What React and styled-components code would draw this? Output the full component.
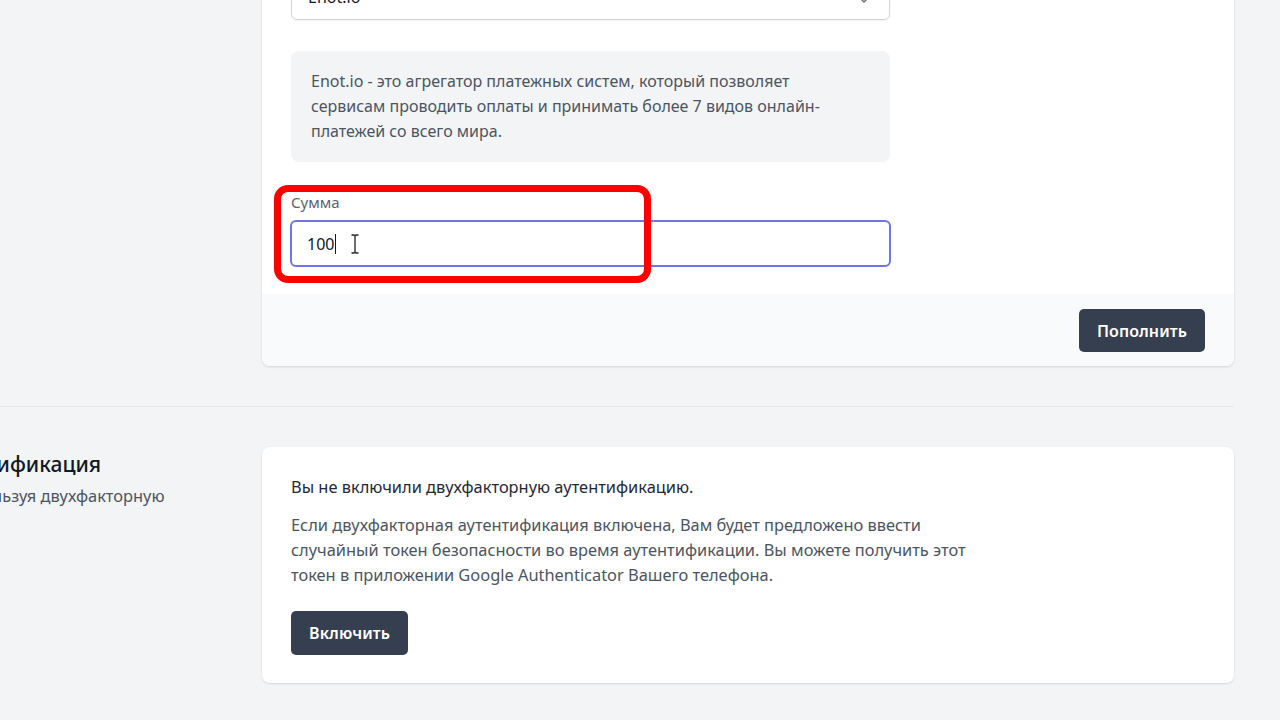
import React from 'react'
import styled, { createGlobalStyle } from 'styled-components'

const Global = createGlobalStyle`
  html, body {
    margin: 0;
    padding: 0;
    background: #f3f4f6;
    overflow: hidden;
  }
  body {
    font-family: "Noto Sans", "Open Sans", sans-serif;
    color: #111827;
  }
`

const Viewport = styled.div`
  width: 1280px;
  height: 720px;
  overflow: hidden;
`

const Page = styled.div`
  margin-top: -84px;
  margin-left: -238px;
  width: 1472px;
`

const Section = styled.div`
  display: grid;
  grid-template-columns: 471px 972px;
  column-gap: 29px;
`

const Aside = styled.div`
  display: flex;
  flex-direction: column;
`

const AsideTitle = styled.h3`
  margin: 0;
  font-size: 21px;
  line-height: 34px;
  font-weight: 500;
  color: #111827;
`

const AsideText = styled.p`
  margin: 2px 0 0;
  font-size: 16.4px;
  line-height: 25px;
  color: #4b5563;
`

const Card = styled.div`
  background: #fff;
  border-radius: 8px;
  box-shadow: 0 1px 3px rgba(0, 0, 0, 0.08), 0 1px 2px rgba(0, 0, 0, 0.05);
  overflow: hidden;
`

const CardBody = styled.div`
  position: relative;
  padding: ${p => p.$top || 29}px 29px ${p => p.$bottom || 29}px;
`

const CardFooter = styled.div`
  display: flex;
  justify-content: flex-end;
  padding: 15px 29px 14px;
  background: #f9fafb;
`

const Label = styled.label`
  display: block;
  font-size: 15px;
  line-height: 25px;
  color: #5b6472;
`

const Select = styled.div`
  box-sizing: border-box;
  margin-top: 4px;
  width: 599px;
  height: 46px;
  display: flex;
  align-items: center;
  justify-content: space-between;
  padding: 0 20px 0 16px;
  border: 1px solid #d1d5db;
  border-radius: 6px;
  box-shadow: 0 1px 2px rgba(0, 0, 0, 0.06);
  font-size: 16px;
  color: #111827;
`

const InfoBox = styled.div`
  box-sizing: border-box;
  margin-top: 31px;
  width: 599px;
  padding: 18px 50px 18px 20px;
  background: #f3f4f6;
  border-radius: 8px;
  font-size: 16px;
  line-height: 25px;
  color: #4b5563;
`

const Field = styled.div`
  margin-top: 28px;
`

const Input = styled.div`
  box-sizing: border-box;
  position: relative;
  margin-top: 5px;
  width: 601px;
  height: 47px;
  margin-left: -1px;
  display: flex;
  align-items: center;
  padding-left: 15px;
  border: 2px solid #7076e3;
  border-radius: 6px;
  font-size: 16px;
  color: #111827;
`

const Caret = styled.span`
  display: inline-block;
  width: 1px;
  height: 20px;
  margin-left: 1px;
  background: #111827;
`

const Pointer = styled.svg`
  position: absolute;
  left: 58px;
  top: 12px;
`

const Highlight = styled.div`
  position: absolute;
  left: 12px;
  top: 269px;
  width: 377px;
  height: 98px;
  box-sizing: border-box;
  border: 7px solid #ff0000;
  border-radius: 14px;
  pointer-events: none;
`

const Button = styled.button`
  height: ${p => p.$h || 43}px;
  padding: 0 18px;
  border: none;
  border-radius: 5px;
  background: #363f50;
  color: #fff;
  font-family: inherit;
  font-size: 16px;
  font-weight: 600;
  letter-spacing: 0.1px;
`

const Separator = styled.div`
  margin: 40px 0;
  border-top: 1px solid #e5e7eb;
  width: 1472px;
`

const Lead = styled.p`
  margin: 0;
  font-size: 16.4px;
  line-height: 25px;
  color: #1f2937;
`

const Body = styled.p`
  margin: 13px 0 0;
  max-width: 690px;
  font-size: 16.4px;
  line-height: 25px;
  color: #4b5563;
`

const Actions = styled.div`
  margin-top: 24px;
`

export default function App() {
  return (
    <Viewport>
      <Global />
      <Page>
        <Section>
          <Aside>
            <AsideTitle>Пополнение баланса</AsideTitle>
          </Aside>
          <Card>
            <CardBody $bottom={27}>
              <Label>Платежная система</Label>
              <Select>
                <span>Enot.io</span>
                <svg width="10" height="14" viewBox="0 0 10 14">
                  <path d="M2 5l3-3 3 3M2 9l3 3 3-3" fill="none" stroke="#6b7280" strokeWidth="1.5" />
                </svg>
              </Select>
              <InfoBox>
                Enot.io - это агрегатор платежных систем, который позволяет сервисам проводить оплаты и принимать более 7 видов онлайн-платежей со всего мира.
              </InfoBox>
              <Field>
                <Label>Сумма</Label>
                <Input>
                  100<Caret />
                  <Pointer width="10" height="20" viewBox="0 0 10 20">
                    <path d="M1.5 1h2.5l1 1 1-1h2.5M5 2v16M1.5 19h2.5l1-1 1 1h2.5" fill="none" stroke="#222" strokeWidth="1.3" />
                  </Pointer>
                </Input>
              </Field>
              <Highlight />
            </CardBody>
            <CardFooter>
              <Button>Пополнить</Button>
            </CardFooter>
          </Card>
        </Section>
        <Separator />
        <Section>
          <Aside>
            <AsideTitle>Двухфакторная аутентификация</AsideTitle>
            <AsideText>
              Защитите свой аккаунт, используя двухфакторную
              <br />
              аутентификацию.
            </AsideText>
          </Aside>
          <Card>
            <CardBody $top={27} $bottom={28}>
              <Lead>Вы не включили двухфакторную аутентификацию.</Lead>
              <Body>
                Если двухфакторная аутентификация включена, Вам будет предложено ввести случайный токен безопасности во время аутентификации. Вы можете получить этот токен в приложении Google Authenticator Вашего телефона.
              </Body>
              <Actions>
                <Button $h={44}>Включить</Button>
              </Actions>
            </CardBody>
          </Card>
        </Section>
      </Page>
    </Viewport>
  )
}
